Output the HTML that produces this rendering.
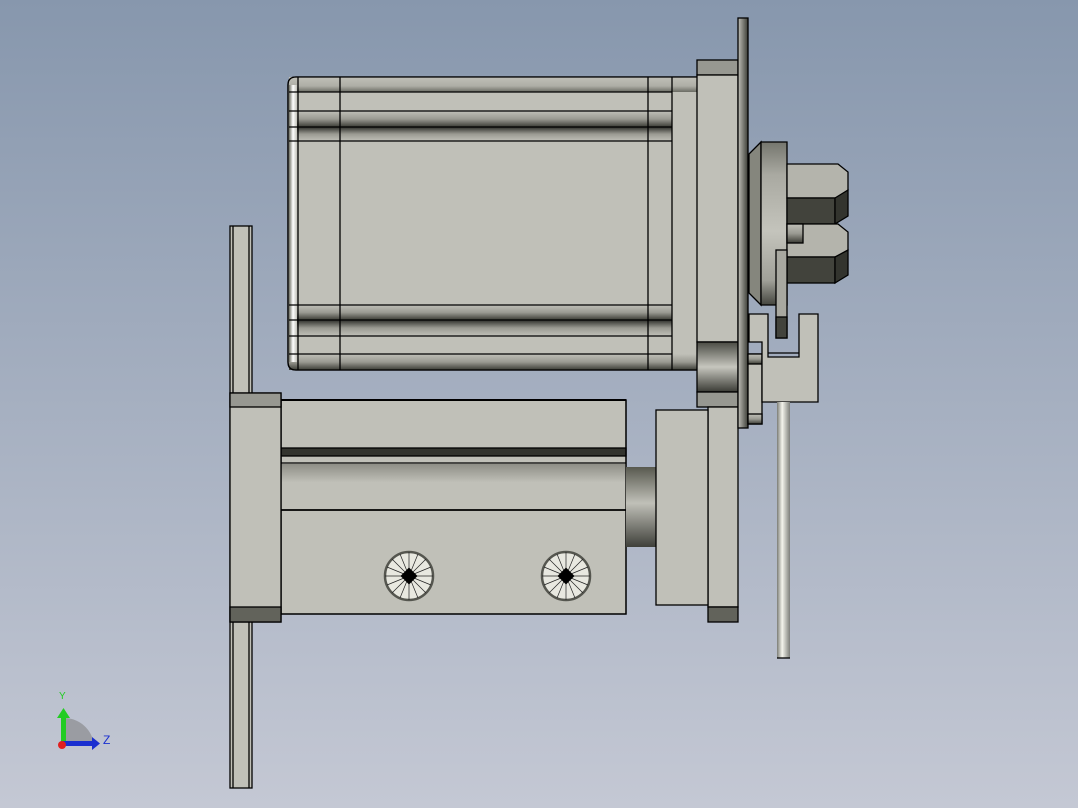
<!DOCTYPE html>
<html><head><meta charset="utf-8"><style>
html,body{margin:0;padding:0;width:1078px;height:808px;overflow:hidden}
svg{display:block}
</style></head><body>
<svg width="1078" height="808" viewBox="0 0 1078 808" xmlns="http://www.w3.org/2000/svg" font-family="Liberation Sans, sans-serif">
<defs>
<linearGradient id="bg" x1="0" y1="0" x2="0" y2="1"><stop offset="0" stop-color="#8797ad"/><stop offset="1" stop-color="#c4c8d4"/></linearGradient>
<linearGradient id="bandDown" x1="0" y1="0" x2="0" y2="1"><stop offset="0" stop-color="#c0c0b8"/><stop offset="0.5" stop-color="#9a9a92"/><stop offset="1" stop-color="#3a3b34"/></linearGradient>
<linearGradient id="bandTop" x1="0" y1="0" x2="0" y2="1"><stop offset="0" stop-color="#c0c0b8"/><stop offset="0.6" stop-color="#aeaea6"/><stop offset="1" stop-color="#6a6b63"/></linearGradient>
<linearGradient id="bandUp" x1="0" y1="1" x2="0" y2="0"><stop offset="0" stop-color="#c0c0b8"/><stop offset="0.5" stop-color="#9a9a92"/><stop offset="1" stop-color="#2e2f2a"/></linearGradient>
<linearGradient id="cyl" x1="0" y1="0" x2="0" y2="1"><stop offset="0" stop-color="#58594f"/><stop offset="0.45" stop-color="#c0c0b8"/><stop offset="1" stop-color="#3f403a"/></linearGradient>
<linearGradient id="groove" x1="0" y1="0" x2="0" y2="1"><stop offset="0" stop-color="#8e8e86"/><stop offset="0.4" stop-color="#c0c0b8"/><stop offset="1" stop-color="#c0c0b8"/></linearGradient>
<linearGradient id="disk" x1="0" y1="0" x2="0" y2="1"><stop offset="0" stop-color="#4a4b44"/><stop offset="0.5" stop-color="#c6c6be"/><stop offset="1" stop-color="#3a3b35"/></linearGradient>
<linearGradient id="hub" x1="0" y1="0" x2="0" y2="1"><stop offset="0" stop-color="#75766e"/><stop offset="0.2" stop-color="#a9a9a1"/><stop offset="0.55" stop-color="#c4c4bc"/><stop offset="0.85" stop-color="#a0a098"/><stop offset="1" stop-color="#45463f"/></linearGradient>
<linearGradient id="pin" x1="0" y1="0" x2="1" y2="0"><stop offset="0" stop-color="#7b7d76"/><stop offset="0.4" stop-color="#f4f4ec"/><stop offset="1" stop-color="#7d7f7a"/></linearGradient>
<linearGradient id="hl" x1="0" y1="0" x2="1" y2="0"><stop offset="0" stop-color="#6c6d60"/><stop offset="0.5" stop-color="#ffffff"/><stop offset="1" stop-color="#c0c0b8"/></linearGradient>
<linearGradient id="plate" x1="0" y1="0" x2="1" y2="0"><stop offset="0" stop-color="#c0c0b8"/><stop offset="1" stop-color="#3c3d37"/></linearGradient>
</defs>
<rect width="1078" height="808" fill="url(#bg)"/>

<g stroke="#000" stroke-width="1.3">
<rect x="230" y="226" width="22" height="562" fill="#c0c0b8"/>
<line x1="233" y1="226" x2="233" y2="788"/><line x1="249" y1="226" x2="249" y2="788"/>

<path d="M296 77 H698 V370 H296 Q288 370 288 362 V85 Q288 77 296 77Z" fill="#c0c0b8"/>
<rect x="289" y="77" width="409" height="15" fill="url(#bandTop)" stroke="none"/>
<rect x="289" y="111" width="383" height="16" fill="url(#bandDown)" stroke="none"/>
<rect x="289" y="127" width="383" height="14" fill="url(#bandUp)" stroke="none"/>
<rect x="289" y="305" width="383" height="15" fill="url(#bandDown)" stroke="none"/>
<rect x="289" y="320" width="383" height="16" fill="url(#bandUp)" stroke="none"/>
<rect x="289" y="354" width="409" height="16" fill="url(#bandDown)" stroke="none"/>
<rect x="289" y="85" width="8" height="277" fill="url(#hl)" stroke="none"/>
<path d="M296 77 H698 V370 H296 Q288 370 288 362 V85 Q288 77 296 77Z" fill="none"/>
<line x1="289" y1="92" x2="672" y2="92"/><line x1="289" y1="111" x2="672" y2="111"/><line x1="289" y1="127" x2="672" y2="127"/><line x1="289" y1="141" x2="672" y2="141"/>
<line x1="289" y1="305" x2="672" y2="305"/><line x1="289" y1="320" x2="672" y2="320"/><line x1="289" y1="336" x2="672" y2="336"/><line x1="289" y1="354" x2="672" y2="354"/>
<line x1="298" y1="77" x2="298" y2="370"/><line x1="340" y1="77" x2="340" y2="370"/><line x1="648" y1="77" x2="648" y2="370"/><line x1="672" y1="77" x2="672" y2="370"/>

<rect x="697" y="60" width="41" height="15" fill="#979891"/>
<rect x="697" y="75" width="41" height="267" fill="#c0c0b8"/>
<rect x="697" y="342" width="41" height="50" fill="url(#disk)"/>
<rect x="697" y="392" width="41" height="15" fill="#979891"/>
<rect x="708" y="407" width="30" height="200" fill="#c0c0b8"/>
<rect x="708" y="607" width="30" height="15" fill="#62635b"/>
<rect x="738" y="18" width="10" height="410" fill="url(#plate)"/>

<rect x="748" y="354" width="14" height="70" fill="#c0c0b8"/>
<rect x="748" y="354" width="14" height="10" fill="url(#bandDown)"/>
<rect x="748" y="414" width="14" height="10" fill="url(#bandDown)"/>

<path d="M761 142 V305 L749 293 V154Z" fill="#85867d"/>
<path d="M761 142 H787 V305 H761Z" fill="url(#hub)"/>
<path d="M787 164 H838 L848 172 V190 L838 198 H787Z" fill="#b4b4ac"/>
<rect x="787" y="198" width="48" height="26" fill="#42433c"/>
<path d="M835 198 L848 190 V216 L835 224Z" fill="#33342e"/>
<path d="M787 224 H838 L848 232 V250 L838 257 H787Z" fill="#b4b4ac"/>
<rect x="787" y="257" width="48" height="26" fill="#42433c"/>
<path d="M835 257 L848 250 V275 L835 283Z" fill="#33342e"/>
<rect x="787" y="224" width="16" height="19" fill="url(#bandDown)"/>
<rect x="776" y="250" width="11" height="88" fill="#a8a8a0"/>
<rect x="776" y="317" width="11" height="21" fill="#42433c"/>

<path d="M749 314 H768 V357 H799 V314 H818 V402 H762 V342 H749Z" fill="#c0c0b8"/>
<line x1="768" y1="353" x2="799" y2="353"/>

<rect x="777" y="402" width="13" height="256" fill="url(#pin)" stroke="none"/>
<line x1="777" y1="658" x2="790" y2="658"/>

<rect x="281" y="400" width="345" height="214" fill="#c0c0b8"/>
<rect x="281" y="448" width="345" height="8" fill="#33342e"/>
<line x1="281" y1="463" x2="626" y2="463"/>
<rect x="281" y="464" width="345" height="46" fill="url(#groove)" stroke="none"/>
<line x1="281" y1="510" x2="626" y2="510" stroke-width="1.8"/>
<rect x="281" y="400" width="345" height="214" fill="none"/>
<line x1="281" y1="400" x2="626" y2="400" stroke-width="2"/>
<rect x="230" y="393" width="51" height="229" fill="#c0c0b8"/>
<rect x="230" y="393" width="51" height="14" fill="#979891"/>
<rect x="230" y="607" width="51" height="15" fill="#62635b"/>
<rect x="626" y="467" width="30" height="80" fill="url(#cyl)" stroke="none"/>
<rect x="656" y="410" width="52" height="195" fill="#c0c0b8"/>
</g>

<g id="s1">
<circle cx="409" cy="576" r="24" fill="#e8e8e0" stroke="#55564f" stroke-width="2.5"/>
<g stroke="#222" stroke-width="0.7">
<line x1="385" y1="576" x2="433" y2="576"/><line x1="409" y1="552" x2="409" y2="600"/>
<line x1="392" y1="559" x2="426" y2="593"/><line x1="426" y1="559" x2="392" y2="593"/>
<line x1="387" y1="567" x2="431" y2="585"/><line x1="387" y1="585" x2="431" y2="567"/>
<line x1="400" y1="554" x2="418" y2="598"/><line x1="418" y1="554" x2="400" y2="598"/>
</g>
<rect x="403" y="570" width="12" height="12" transform="rotate(45 409 576)" fill="#000"/>
</g>
<use href="#s1" x="157"/>

<path d="M64 745 V718 A30 30 0 0 1 94 745Z" fill="#9a9ca2"/>
<rect x="61" y="716" width="5" height="30" fill="#22cc22"/>
<path d="M57 718 L63.5 708 L70 718Z" fill="#22cc22"/>
<rect x="62" y="741" width="30" height="5" fill="#1a2fd0"/>
<path d="M92 737 L100 743.5 L92 750Z" fill="#1a2fd0"/>
<circle cx="62" cy="745" r="4" fill="#e02020"/>
<text x="59" y="699" font-size="10" fill="#22cc22">Y</text>
<text x="103" y="744" font-size="12" fill="#1a2fd0">Z</text>
</svg>
</body></html>
